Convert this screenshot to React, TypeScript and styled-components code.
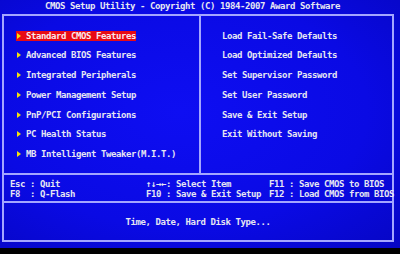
import React from 'react';
import styled, { createGlobalStyle } from 'styled-components';

const GlobalStyle = createGlobalStyle`
  html, body {
    margin: 0;
    padding: 0;
    background: #000;
  }
`;

const Screen = styled.div`
  width: 400px;
  height: 254px;
  background: #000;
  overflow: hidden;
  font-family: 'DejaVu Sans Mono', 'Liberation Mono', monospace;
  font-weight: bold;
  font-size: 9px;
  letter-spacing: -0.42px;
  color: #e6e6f2;
`;

const Blue = styled.div`
  height: 248px;
  padding: 0 6px 0 2px;
  background: radial-gradient(ellipse at 45% 45%, #0e0ef2 0%, #0a0ae4 60%, #0606c4 100%);
  display: flex;
  flex-direction: column;
`;

const Title = styled.div`
  height: 14px;
  line-height: 13px;
  padding-left: 43px;
  white-space: pre;
`;

const Frame = styled.div`
  border: 2px solid #a4a6ff;
  display: flex;
  flex-direction: column;
`;

const Main = styled.div`
  height: 157px;
  display: grid;
  grid-template-columns: 197px 1fr;
  border-bottom: 2px solid #a4a6ff;
`;

const Column = styled.div<{ $left?: boolean }>`
  display: flex;
  flex-direction: column;
  gap: 9.8px;
  padding-top: 14.5px;
  padding-left: ${(p) => (p.$left ? '12px' : '21px')};
  border-right: ${(p) => (p.$left ? '2px solid #a4a6ff' : 'none')};
`;

const Item = styled.div<{ $active?: boolean }>`
  height: 10px;
  line-height: 10px;
  display: flex;
  align-items: center;
  align-self: flex-start;
  white-space: pre;
  background: ${(p) => (p.$active ? '#e80a14' : 'transparent')};
  color: ${(p) => (p.$active ? '#fbe6e8' : '#e6e6f2')};
`;

const Arrow = styled.span`
  width: 0;
  height: 0;
  margin: 0 5px 0 1px;
  border-top: 3px solid transparent;
  border-bottom: 3px solid transparent;
  border-left: 4px solid #f4e20a;
`;

const Keys = styled.div`
  height: 28px;
  padding: 4px 0 0 6px;
  box-sizing: border-box;
  display: grid;
  grid-template-columns: 136px 123px 1fr;
  grid-auto-rows: 10px;
  line-height: 10px;
  white-space: pre;
  border-bottom: 2px solid #a4a6ff;
`;

const Desc = styled.div`
  height: 37px;
  padding-top: 14px;
  box-sizing: border-box;
  line-height: 10px;
  text-align: center;
`;

const leftItems = [
  'Standard CMOS Features',
  'Advanced BIOS Features',
  'Integrated Peripherals',
  'Power Management Setup',
  'PnP/PCI Configurations',
  'PC Health Status',
  'MB Intelligent Tweaker(M.I.T.)',
];

const rightItems = [
  'Load Fail-Safe Defaults',
  'Load Optimized Defaults',
  'Set Supervisor Password',
  'Set User Password',
  'Save & Exit Setup',
  'Exit Without Saving',
];

const keys = [
  'Esc : Quit',
  '\u2191\u2193\u2192\u2190: Select Item',
  'F11 : Save CMOS to BIOS',
  'F8  : Q-Flash',
  'F10 : Save & Exit Setup',
  'F12 : Load CMOS from BIOS',
];

const App: React.FC = () => {
  return (
    <>
      <GlobalStyle />
      <Screen>
        <Blue>
          <Title>CMOS Setup Utility - Copyright (C) 1984-2007 Award Software</Title>
          <Frame>
            <Main>
              <Column $left>
                {leftItems.map((label, i) => (
                  <Item key={label} $active={i === 0}>
                    <Arrow />
                    {label}
                  </Item>
                ))}
              </Column>
              <Column>
                {rightItems.map((label) => (
                  <Item key={label}>{label}</Item>
                ))}
              </Column>
            </Main>
            <Keys>
              {keys.map((k) => (
                <span key={k}>{k}</span>
              ))}
            </Keys>
            <Desc>Time, Date, Hard Disk Type...</Desc>
          </Frame>
        </Blue>
      </Screen>
    </>
  );
};

export default App;
